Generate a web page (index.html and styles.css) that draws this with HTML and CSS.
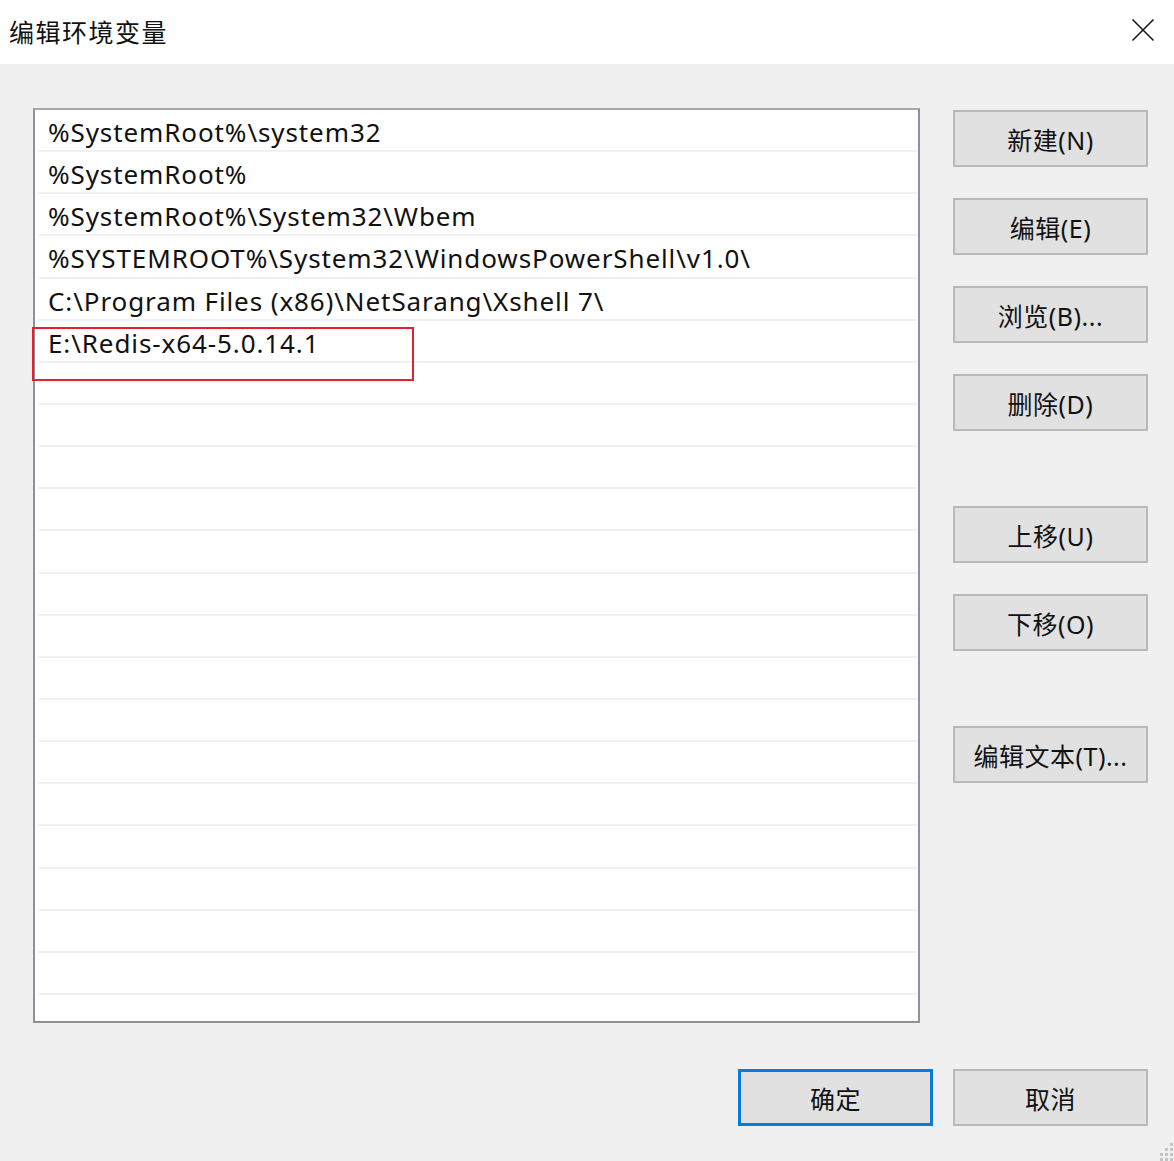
FILE: index.html
```html
<!DOCTYPE html>
<html lang="zh-CN">
<head>
<meta charset="utf-8">
<title>编辑环境变量</title>
<link rel="stylesheet" href="styles.css">
</head>
<body>
<div class="window">
  <header class="titlebar">
    <span class="title">编辑环境变量</span>
    <svg class="close" width="24" height="24" viewBox="0 0 24 24"><path d="M1.5 1.5 L22.5 22.5 M22.5 1.5 L1.5 22.5" stroke="#1a1a1a" stroke-width="1.6" fill="none"/></svg>
  </header>
  <main class="content">
    <div class="top">
      <div class="list">
        <div class="row">%SystemRoot%\system32</div>
        <div class="row">%SystemRoot%</div>
        <div class="row">%SystemRoot%\System32\Wbem</div>
        <div class="row">%SYSTEMROOT%\System32\WindowsPowerShell\v1.0\</div>
        <div class="row">C:\Program Files (x86)\NetSarang\Xshell 7\</div>
        <div class="row">E:\Redis-x64-5.0.14.1</div>
        <div class="row"></div><div class="row"></div><div class="row"></div><div class="row"></div>
        <div class="row"></div><div class="row"></div><div class="row"></div><div class="row"></div>
        <div class="row"></div><div class="row"></div><div class="row"></div><div class="row"></div>
        <div class="row"></div><div class="row"></div><div class="row"></div><div class="row last"></div>
        <div class="highlight"></div>
      </div>
      <div class="side">
        <div class="group">
          <button class="btn">新建(N)</button>
          <button class="btn">编辑(E)</button>
          <button class="btn">浏览(B)...</button>
          <button class="btn">删除(D)</button>
        </div>
        <div class="group">
          <button class="btn">上移(U)</button>
          <button class="btn">下移(O)</button>
        </div>
        <div class="group">
          <button class="btn">编辑文本(T)...</button>
        </div>
      </div>
    </div>
    <div class="bottom">
      <button class="btn primary">确定</button>
      <button class="btn">取消</button>
    </div>
  </main>
  <svg class="grip" width="16" height="20" viewBox="0 0 16 20">
    <g fill="#c4c4c4">
      <rect x="12" y="0" width="3" height="3"/>
      <rect x="12" y="5" width="3" height="3"/><rect x="7" y="5" width="3" height="3"/>
      <rect x="12" y="10" width="3" height="3"/><rect x="7" y="10" width="3" height="3"/><rect x="2" y="10" width="3" height="3"/>
      <rect x="12" y="15" width="3" height="3"/><rect x="7" y="15" width="3" height="3"/><rect x="2" y="15" width="3" height="3"/>
    </g>
  </svg>
</div>
</body>
</html>
```
FILE: styles.css
```css
html, body {
  margin: 0;
  padding: 0;
}
body {
  background: #f0f0f0;
  font-family: "Noto Sans", "Noto Sans CJK SC", sans-serif;
  color: #000;
}
.window {
  position: relative;
  width: 1174px;
  height: 1161px;
  overflow: hidden;
  background: #f0f0f0;
}
.titlebar {
  height: 64px;
  background: #fff;
  display: flex;
  align-items: center;
  justify-content: space-between;
  padding: 0 19px 0 9px;
  box-sizing: border-box;
}
.title {
  font-family: "Noto Sans CJK SC", sans-serif;
  font-size: 25px;
  color: #111;
  letter-spacing: 1.5px;
  margin-top: -2px;
}
.close {
  display: block;
  margin-top: -4px;
}
.content {
  padding: 44px 26px 0 33px;
}
.top {
  display: flex;
  gap: 33px;
}
.list {
  position: relative;
  width: 887px;
  height: 915px;
  box-sizing: border-box;
  background: #fff;
  border: 2px solid #9a9da3;
  border-color: #a4a7ad #8e9197 #8e9197 #8e9197;
  padding: 0 1px 0 3px;
}
.row {
  height: 42.15px;
  box-sizing: border-box;
  border-bottom: 2px solid #f1f1f1;
  padding-left: 10px;
  padding-top: 3px;
  font-size: 26px;
  letter-spacing: 0.9px;
  line-height: 39px;
  color: #111;
  white-space: nowrap;
}
.row.last {
  height: 22px;
  border-bottom: none;
}
.highlight {
  position: absolute;
  left: -3px;
  top: 217px;
  width: 382px;
  height: 54px;
  box-sizing: border-box;
  border: 2px solid #e3202b;
}
.side {
  display: flex;
  flex-direction: column;
  gap: 75px;
  padding-top: 2px;
}
.group {
  display: flex;
  flex-direction: column;
  gap: 31px;
}
.btn {
  width: 195px;
  height: 57px;
  box-sizing: border-box;
  background: #e1e1e1;
  border: 2px solid #b9b9b9;
  font-family: "Noto Sans", "Noto Sans CJK SC", sans-serif;
  font-size: 25px;
  letter-spacing: 0.5px;
  color: #111;
  padding: 0;
  margin: 0;
}
.btn.primary {
  border: 3px solid #0a7ad8;
}
.bottom {
  display: flex;
  justify-content: flex-end;
  gap: 20px;
  margin-top: 46px;
}
.grip {
  position: absolute;
  right: 0;
  bottom: -2px;
}
```
